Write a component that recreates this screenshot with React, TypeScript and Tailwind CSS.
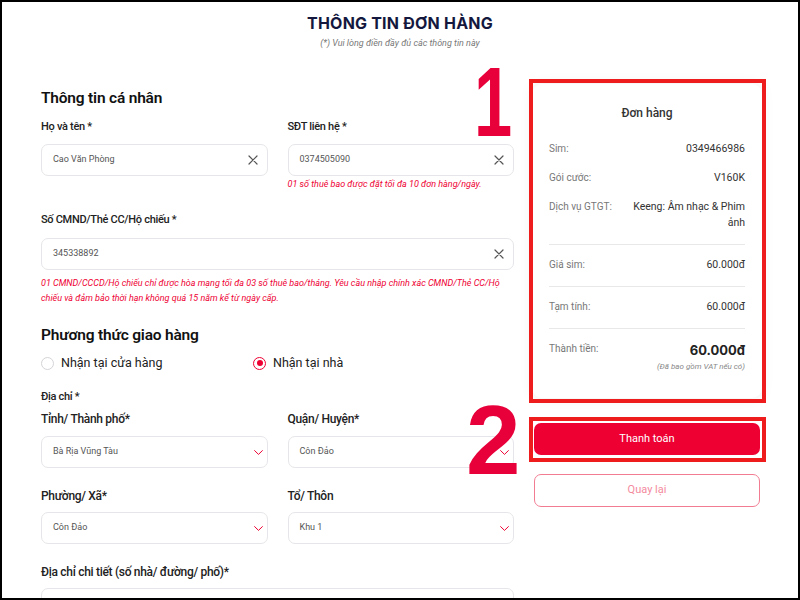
import React from "react";

const XIcon = () => (
  <svg width="10" height="10" viewBox="0 0 10 10" className="shrink-0">
    <path d="M1 1 L9 9 M9 1 L1 9" stroke="#555" strokeWidth="1.2" strokeLinecap="round" />
  </svg>
);

const Chevron = () => (
  <svg width="9" height="5" viewBox="0 0 9 5" className="shrink-0">
    <path d="M0.6 0.6 L4.5 4.4 L8.4 0.6" stroke="#ee0033" strokeWidth="1" fill="none" strokeLinecap="round" strokeLinejoin="round" />
  </svg>
);

const Input = ({ value, icon }: { value: string; icon: "x" | "chev" | "none" }) => (
  <div
    className={
      "h-[32px] rounded-[7px] border border-[#e6e6ea] bg-white flex items-center justify-between pl-[11px] " +
      (icon === "chev" ? "pr-[4px]" : "pr-[9px]")
    }
  >
    <span className="text-[9px] text-[#555]">{value}</span>
    {icon === "x" ? <XIcon /> : icon === "chev" ? <Chevron /> : null}
  </div>
);

const Label = ({ children, cls = "" }: { children: React.ReactNode; cls?: string }) => (
  <div className={"text-[11px] leading-[16px] font-medium tracking-[-0.3px] text-[#222] " + cls}>{children}</div>
);

const SelLabel = ({ children }: { children: React.ReactNode }) => (
  <div className="text-[12px] leading-[18px] font-medium tracking-[-0.3px] text-[#222]">{children}</div>
);

const Row = ({ label, value }: { label: string; value: React.ReactNode }) => (
  <div className="flex justify-between items-start">
    <span className="text-[10px] leading-[16px] text-[#777]">{label}</span>
    <span className="text-[10.5px] leading-[16px] text-[#333] text-right w-[118px]">{value}</span>
  </div>
);

const Divider = () => <div className="h-px bg-[#e8e8e8] mt-[13px] mb-[12px]" />;

export default function App() {
  return (
    <div
      className="relative w-[800px] h-[600px] border-2 border-black bg-white overflow-hidden"
      style={{ fontFamily: "Roboto, 'Noto Sans', sans-serif" }}
    >
      {/* Header */}
      <div className="pt-[11px] text-center">
        <div className="text-[16px] leading-[20px] font-bold text-[#14183e] tracking-[0.2px]" style={{ fontFamily: "Inter, Roboto, sans-serif" }}>
          THÔNG TIN ĐƠN HÀNG
        </div>
        <div className="mt-[4px] text-[9px] leading-[12px] italic text-[#777]">(*) Vui lòng điền đầy đủ các thông tin này</div>
      </div>

      {/* Main */}
      <div className="mt-[35px] pl-[39px] flex gap-[18px]">
        {/* Left */}
        <div className="w-[473px] pt-[4px]">
          <div className="text-[15.5px] leading-[20px] font-semibold tracking-[-0.2px] text-[#111]">Thông tin cá nhân</div>

          <div className="mt-[11px] grid grid-cols-2 gap-x-[20px]">
            <div>
              <Label>Họ và tên *</Label>
              <div className="mt-[9px]">
                <Input value="Cao Văn Phòng" icon="x" />
              </div>
            </div>
            <div>
              <Label>SĐT liên hệ *</Label>
              <div className="mt-[9px]">
                <Input value="0374505090" icon="x" />
              </div>
              <div className="mt-[1px] text-[9px] leading-[14px] italic text-[#ee0033]">01 số thuê bao được đặt tối đa 10 đơn hàng/ngày.</div>
            </div>
          </div>

          <Label cls="mt-[21px]">Số CMND/Thẻ CC/Hộ chiếu *</Label>
          <div className="mt-[10px]">
            <Input value="345338892" icon="x" />
          </div>
          <div className="mt-[6px] text-[9px] leading-[15px] italic text-[#ee0033]">
            01 CMND/CCCD/Hộ chiếu chỉ được hòa mạng tối đa 03 số thuê bao/tháng. Yêu cầu nhập chính xác CMND/Thẻ CC/Hộ chiếu và đảm bảo thời hạn không quá 15 năm kể từ ngày cấp.
          </div>

          <div className="mt-[19px] text-[15.5px] leading-[20px] font-semibold tracking-[-0.2px] text-[#111]">Phương thức giao hàng</div>
          <div className="mt-[8px] flex items-center text-[12.5px] leading-[20px] text-[#222]">
            <div className="w-[212px] flex items-center gap-[7px]">
              <span className="w-[13px] h-[13px] rounded-full border border-[#d4d4d8] bg-white" />
              <span>Nhận tại cửa hàng</span>
            </div>
            <div className="flex items-center gap-[7px]">
              <span className="w-[13px] h-[13px] rounded-full border-[1.5px] border-[#ee0033] flex items-center justify-center">
                <span className="w-[6px] h-[6px] rounded-full bg-[#ee0033]" />
              </span>
              <span>Nhận tại nhà</span>
            </div>
          </div>

          <Label cls="mt-[16px]">Địa chỉ *</Label>

          <div className="mt-[5px] grid grid-cols-2 gap-x-[20px]">
            <div>
              <SelLabel>Tỉnh/ Thành phố*</SelLabel>
              <div className="mt-[8px]">
                <Input value="Bà Rịa Vũng Tàu" icon="chev" />
              </div>
            </div>
            <div>
              <SelLabel>Quận/ Huyện*</SelLabel>
              <div className="mt-[8px]">
                <Input value="Côn Đảo" icon="chev" />
              </div>
            </div>
            <div className="mt-[19px]">
              <SelLabel>Phường/ Xã*</SelLabel>
              <div className="mt-[7px]">
                <Input value="Côn Đảo" icon="chev" />
              </div>
            </div>
            <div className="mt-[19px]">
              <SelLabel>Tổ/ Thôn</SelLabel>
              <div className="mt-[7px]">
                <Input value="Khu 1" icon="chev" />
              </div>
            </div>
          </div>

          <div className="mt-[19px]">
            <SelLabel>Địa chỉ chi tiết (số nhà/ đường/ phố)*</SelLabel>
            <div className="mt-[7px]">
              <Input value="" icon="none" />
            </div>
          </div>
        </div>

        {/* Right */}
        <div className="w-[230px]">
          <div className="h-[314px] rounded-[10px] bg-white shadow-[0_0_14px_rgba(20,20,60,0.07)] px-[17px] pt-[21px]">
            <div className="text-center text-[12px] leading-[16px] font-medium text-[#333]">Đơn hàng</div>
            <div className="mt-[20px] flex flex-col gap-[13px]">
              <Row label="Sim:" value="0349466986" />
              <Row label="Gói cước:" value="V160K" />
              <Row label="Dịch vụ GTGT:" value="Keeng: Âm nhạc & Phim ảnh" />
            </div>
            <Divider />
            <Row label="Giá sim:" value="60.000đ" />
            <Divider />
            <Row label="Tạm tính:" value="60.000đ" />
            <Divider />
            <div className="mt-[3px] flex justify-between items-start">
              <span className="text-[10px] leading-[16px] text-[#777]">Thành tiền:</span>
              <div className="text-right">
                <div className="text-[13px] leading-[18px] font-bold text-[#222]" style={{ fontFamily: "Inter, Roboto, sans-serif" }}>60.000đ</div>
                <div className="mt-[2px] text-[8px] leading-[12px] italic text-[#888]">(Đã bao gồm VAT nếu có)</div>
              </div>
            </div>
          </div>
          <div className="mt-[25px] mx-[2px] h-[32px] rounded-[7px] bg-[#ee0033] flex items-center justify-center text-[11px] text-white">
            Thanh toán
          </div>
          <div className="mt-[19px] mx-[2px] h-[33px] rounded-[7px] border-[1.5px] border-[#f27d93] flex items-center justify-center text-[11px] text-[#f48a9e]">
            Quay lại
          </div>
        </div>
      </div>

      {/* Annotations */}
      <div className="absolute left-[527px] top-[77px] w-[237px] h-[324px] border-4 border-[#ee1c1c]" />
      <div className="absolute left-[527px] top-[415px] w-[237px] h-[45px] border-4 border-[#ee1c1c]" />
      <div
        className="absolute left-[472px] top-[51px] text-[98px] leading-none font-bold text-[#e8003a] scale-x-[0.7] origin-left"
        style={{ fontFamily: "'Liberation Sans', Arial, sans-serif" }}
      >
        1
      </div>
      <div
        className="absolute left-[464px] top-[389px] text-[98px] leading-none font-bold text-[#e8003a]"
        style={{ fontFamily: "'Liberation Sans', Arial, sans-serif" }}
      >
        2
      </div>
    </div>
  );
}
